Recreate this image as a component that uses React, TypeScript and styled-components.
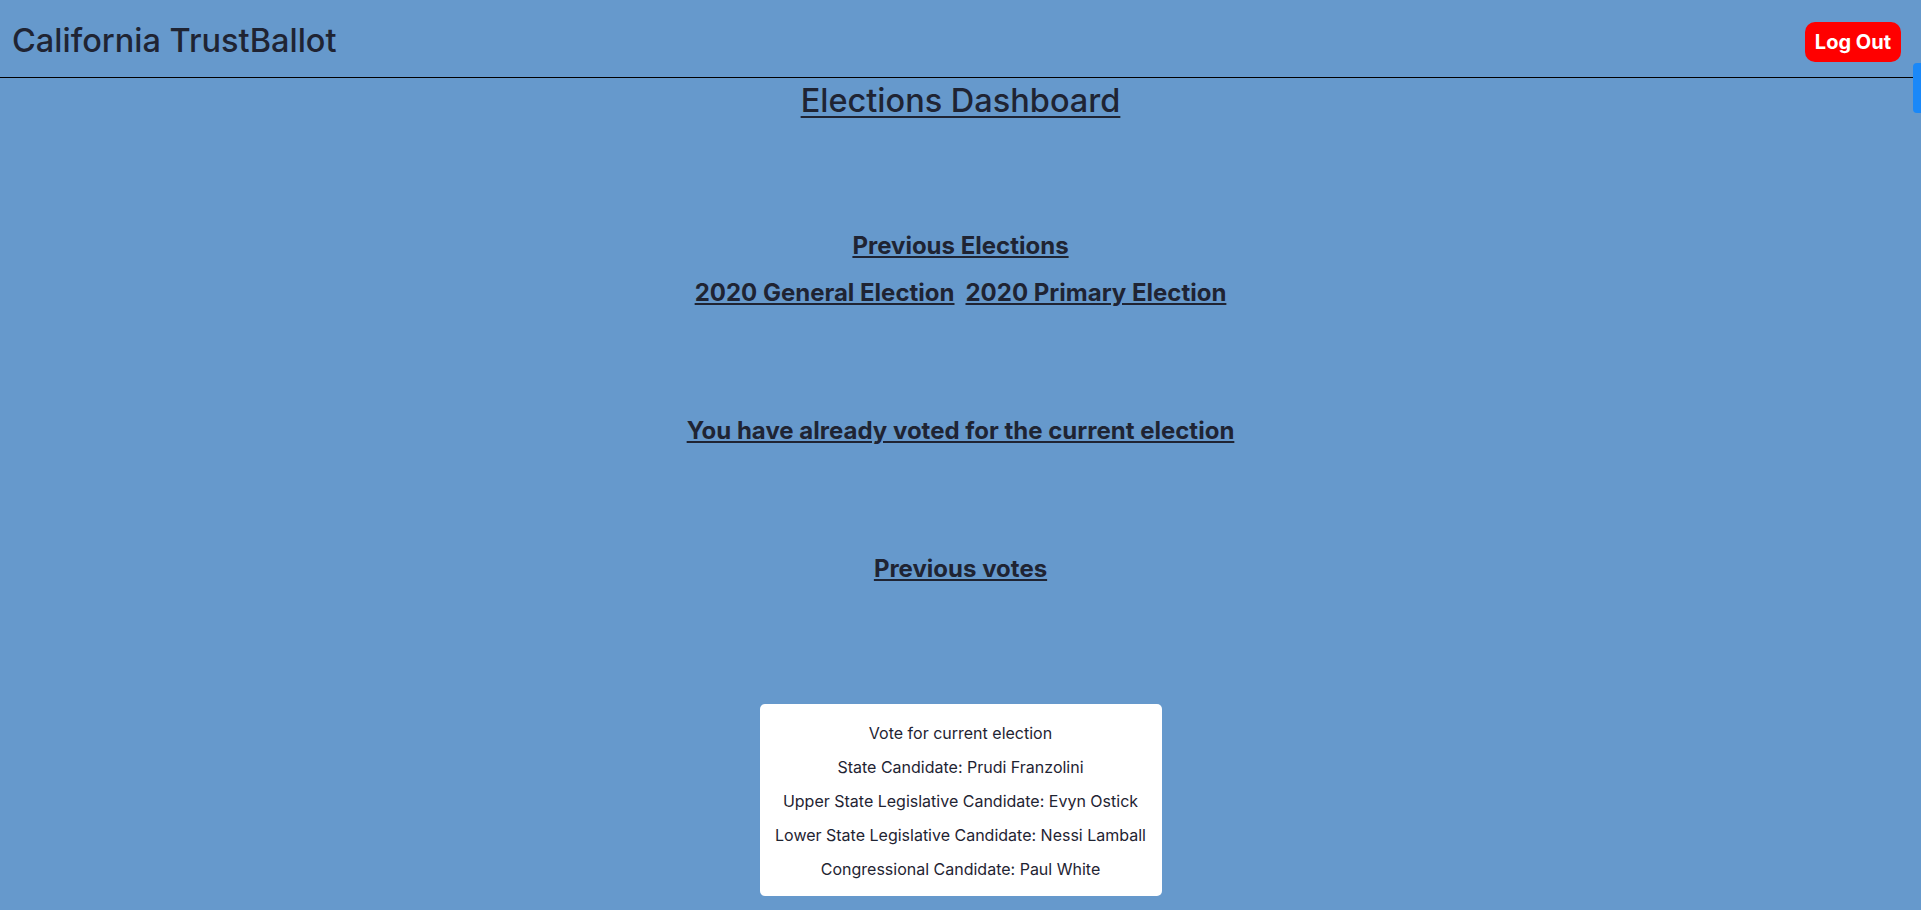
import React from "react";
import styled, { createGlobalStyle } from "styled-components";

const GlobalStyle = createGlobalStyle`
  html, body {
    margin: 0;
    padding: 0;
    background: #6699cc;
    overflow: hidden;
  }
  body {
    font-family: Inter, "Noto Sans", sans-serif;
    color: #1f2433;
  }
  * { box-sizing: border-box; }
`;

const Page = styled.div`
  width: 1921px;
  height: 910px;
  background: #6699cc;
  position: relative;
  overflow: hidden;
`;

const Header = styled.header`
  width: 1913px;
  height: 78px;
  padding: 0 12px;
  display: flex;
  align-items: center;
  justify-content: space-between;
  border-bottom: 1px solid #000;
`;

const Brand = styled.div`
  font-family: Inter, sans-serif;
  font-size: 32.5px;
  font-weight: 500;
  line-height: 40px;
  color: #1f2433;
  margin-top: 4px;
`;

const LogoutButton = styled.button`
  height: 40px;
  padding: 0 10px;
  border: none;
  border-radius: 10px;
  background: #ff0000;
  color: #ffffff;
  font-family: Inter, sans-serif;
  font-weight: 700;
  font-size: 20px;
  line-height: 40px;
  margin-top: 6px;
  cursor: pointer;
`;

const Main = styled.main`
  display: flex;
  flex-direction: column;
  align-items: center;
`;

const Title = styled.h1`
  margin: 3px 0 0;
  font-family: Inter, sans-serif;
  font-size: 32.5px;
  font-weight: 500;
  line-height: 40px;
  text-decoration: underline;
  text-underline-offset: 4px;
  text-decoration-thickness: 2px;
`;

const Heading = styled.h3<{ $top: number }>`
  margin: ${(p) => p.$top}px 0 0;
  font-family: Inter, sans-serif;
  font-size: 24px;
  font-weight: 700;
  line-height: 28px;
  text-decoration: underline;
`;

const LinkRow = styled.div`
  margin-top: 19px;
  display: flex;
  gap: 11px;
`;

const ElectionLink = styled.a`
  font-family: Inter, sans-serif;
  font-size: 24px;
  font-weight: 700;
  line-height: 28px;
  color: inherit;
  text-decoration: underline;
  cursor: pointer;
`;

const VoteCard = styled.section`
  margin-top: 121px;
  width: 402px;
  background: #ffffff;
  border-radius: 5px;
  padding: 12px 15px 10px;
  display: flex;
  flex-direction: column;
  align-items: center;
`;

const VoteLine = styled.p`
  margin: 0;
  font-family: Inter, sans-serif;
  font-size: 16px;
  line-height: 34px;
  color: #1f2433;
  white-space: nowrap;
`;

const ScrollThumb = styled.div`
  position: absolute;
  right: 0;
  top: 63px;
  width: 8px;
  height: 50px;
  border-radius: 4px 0 0 4px;
  background: #1a88f8;
`;

const votes = [
  "Vote for current election",
  "State Candidate: Prudi Franzolini",
  "Upper State Legislative Candidate: Evyn Ostick",
  "Lower State Legislative Candidate: Nessi Lamball",
  "Congressional Candidate: Paul White",
];

export default function App() {
  return (
    <Page>
      <GlobalStyle />
      <Header>
        <Brand>California TrustBallot</Brand>
        <LogoutButton>Log Out</LogoutButton>
      </Header>
      <Main>
        <Title>Elections Dashboard</Title>
        <Heading $top={111}>Previous Elections</Heading>
        <LinkRow>
          <ElectionLink>2020 General Election</ElectionLink>
          <ElectionLink>2020 Primary Election</ElectionLink>
        </LinkRow>
        <Heading $top={110}>You have already voted for the current election</Heading>
        <Heading $top={110}>Previous votes</Heading>
        <VoteCard>
          {votes.map((v) => (
            <VoteLine key={v}>{v}</VoteLine>
          ))}
        </VoteCard>
      </Main>
      <ScrollThumb />
    </Page>
  );
}
